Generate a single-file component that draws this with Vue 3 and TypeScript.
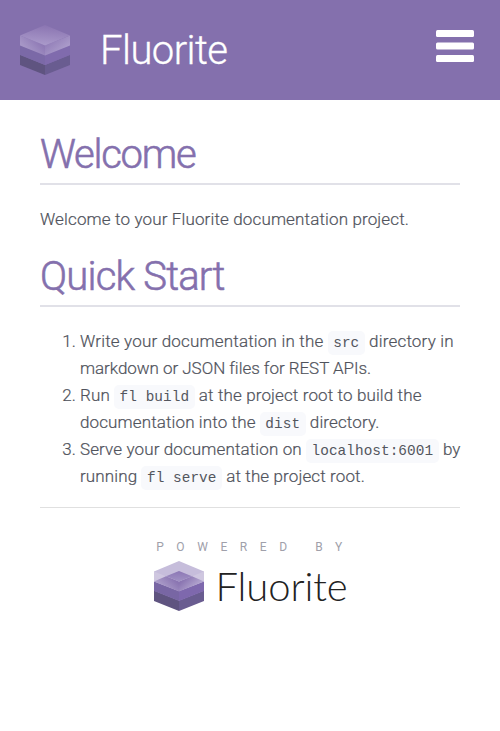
<script setup lang="ts">
interface Part {
  text: string
  code?: boolean
}

const steps: Part[][][] = [
  [
    [{ text: 'Write your documentation in the ' }, { text: 'src', code: true }, { text: ' directory in' }],
    [{ text: 'markdown or JSON files for REST APIs.' }],
  ],
  [
    [{ text: 'Run ' }, { text: 'fl build', code: true }, { text: ' at the project root to build the' }],
    [{ text: 'documentation into the ' }, { text: 'dist', code: true }, { text: ' directory.' }],
  ],
  [
    [{ text: 'Serve your documentation on ' }, { text: 'localhost:6001', code: true }, { text: ' by' }],
    [{ text: 'running ' }, { text: 'fl serve', code: true }, { text: ' at the project root.' }],
  ],
]
</script>

<template>
  <header class="bar">
    <svg class="logo" viewBox="0 0 50 50" aria-hidden="true">
      <defs>
        <linearGradient id="top" x1="0.6" y1="0" x2="0.4" y2="1">
          <stop offset="0" stop-color="#8a74b1" />
          <stop offset="1" stop-color="#ab9bcb" />
        </linearGradient>
        <linearGradient id="left" x1="0.2" y1="0.6" x2="0.7" y2="0.2">
          <stop offset="0" stop-color="#a696c6" />
          <stop offset="1" stop-color="#8e79b5" />
        </linearGradient>
        <linearGradient id="right" x1="0.1" y1="0.2" x2="0.7" y2="0.8">
          <stop offset="0" stop-color="#8e79b5" />
          <stop offset="1" stop-color="#ac9dcb" />
        </linearGradient>
      </defs>
      <path d="M0 40V29.8L25 40V50Z" fill="#5f5480" />
      <path d="M50 40V29.8L25 40V50Z" fill="#695c90" />
      <path d="M0 30V20L25 30V40Z" fill="#7b69a7" />
      <path d="M50 30V20L25 30V40Z" fill="#806bad" />
      <path d="M0 20.4V10.4L25 20.6V30.6Z" fill="url(#left)" />
      <path d="M50 20.4V10.4L25 20.6V30.6Z" fill="url(#right)" />
      <path d="M25 0L50 10.4L25 20.6L0 10.4Z" fill="url(#top)" />
    </svg>
    <span class="brand">Fluorite</span>
    <svg class="menu" viewBox="0 0 38 32" aria-label="Menu">
      <rect width="38" height="7" rx="1.5" />
      <rect y="12.6" width="38" height="7" rx="1.5" />
      <rect y="25" width="38" height="7" rx="1.5" />
    </svg>
  </header>

  <main class="content">
    <h1><span class="welcome">Welcome</span></h1>
    <p class="intro">Welcome to your Fluorite documentation project.</p>
    <h1><span class="quick">Quick Start</span></h1>
    <ol class="steps">
      <li v-for="(lines, i) in steps" :key="i">
        <span v-for="(line, j) in lines" :key="j" class="line" :class="`l${i}${j}`"><template v-for="(part, k) in line" :key="k"><code v-if="part.code">{{ part.text }}</code><span v-else>{{ part.text }}</span></template></span>
      </li>
    </ol>
    <footer class="footer">
      <div class="powered">POWERED BY</div>
      <div class="lockup">
        <svg class="logo" viewBox="0 0 50 50" aria-hidden="true">
          <defs>
            <linearGradient id="inner" x1="0.5" y1="0" x2="0.5" y2="1">
              <stop offset="0" stop-color="#8c77b5" />
              <stop offset="1" stop-color="#a192c4" />
            </linearGradient>
            <linearGradient id="fl" gradientUnits="userSpaceOnUse" x1="4" y1="24" x2="14" y2="13">
              <stop offset="0" stop-color="#aea0cb" />
              <stop offset="1" stop-color="#8b76b2" />
            </linearGradient>
            <linearGradient id="fr" gradientUnits="userSpaceOnUse" x1="34" y1="15" x2="43" y2="25">
              <stop offset="0" stop-color="#8b76b2" />
              <stop offset="1" stop-color="#b3a6cf" />
            </linearGradient>
          </defs>
          <path d="M0 40V29.5L25 39.5V50Z" fill="#5f5480" />
          <path d="M50 40V29.5L25 39.5V50Z" fill="#695c90" />
          <path d="M0 30V20L25 30V40Z" fill="#7866a4" />
          <path d="M50 30V20L25 30V40Z" fill="#7e68ad" />
          <path d="M25 0L50 10.4V20.4L25 30L0 20.4V10.4Z" fill="#c6bddb" />
          <path d="M0 10.4L25 20.6L50 10.4V20.4H0Z" fill="#cfc7e0" />
          <path d="M0 20.4L12 15.2L25 20.6V30.6Z" fill="url(#fl)" />
          <path d="M50 20.4L38 15.2L25 20.6V30.6Z" fill="url(#fr)" />
          <path d="M25 10L38 15.2L25 20.6L12 15.2Z" fill="url(#inner)" />
        </svg>
        <span class="wordmark">Fluorite</span>
      </div>
    </footer>
  </main>
</template>

<style>
body {
  background: #fff;
}
</style>

<style scoped>
.bar {
  box-sizing: border-box;
  height: 100px;
  display: flex;
  align-items: center;
  padding: 0 26px 0 20px;
  background: #8470ad;
  color: #fff;
  font-family: Roboto, "Open Sans", sans-serif;
}
.logo {
  width: 50px;
  height: 50px;
  flex: none;
}
.brand {
  margin-left: 30px;
  padding-top: 2px;
  font-size: 40px;
  font-weight: 300;
  line-height: 60px;
  letter-spacing: -0.55px;
  -webkit-text-stroke: 0.3px currentColor;
}
.menu {
  width: 38px;
  height: 32px;
  margin-left: auto;
  margin-bottom: 8px;
  fill: #fff;
}
.content {
  padding: 24px 40px 0;
  color: #50535c;
  font-family: Roboto, "Open Sans", sans-serif;
  font-size: 17px;
  font-weight: 300;
  line-height: 27px;
}
h1 {
  box-sizing: border-box;
  height: 61px;
  margin: 0;
  border-bottom: 2px solid #e1e1e8;
  color: #8470ad;
  font-size: 40px;
  font-weight: 300;
  line-height: 62px;
  white-space: nowrap;
  -webkit-text-stroke: 0.6px currentColor;
}
.welcome {
  letter-spacing: -1.25px;
}
.quick {
  letter-spacing: -0.8px;
}
.intro {
  margin: 21px 0 13px;
  letter-spacing: 0.14px;
  white-space: nowrap;
  -webkit-text-stroke: 0.2px currentColor;
}
.steps {
  margin: 21px 0 17px;
  padding-left: 40px;
  -webkit-text-stroke: 0.2px currentColor;
}
.line {
  display: block;
  height: 27px;
  letter-spacing: 0.12px;
  white-space: pre;
}
.l00 {
  letter-spacing: 0.18px;
}
.l01 {
  letter-spacing: -0.04px;
}
code {
  padding: 4px 5.5px;
  border-radius: 5px;
  background: #f8f9fc;
  color: #53565e;
  font-family: "Liberation Mono", monospace;
  font-size: 14.4px;
  letter-spacing: 0.05px;
  -webkit-text-stroke: 0;
}
.footer {
  display: flex;
  flex-direction: column;
  align-items: center;
  border-top: 1px solid #e0e0e0;
  padding-top: 30px;
}
.powered {
  margin-right: -11px;
  font-size: 12px;
  font-weight: 400;
  line-height: 18px;
  letter-spacing: 12.6px;
  color: #a0a0aa;
}
.lockup {
  display: flex;
  align-items: center;
  gap: 11px;
  margin-top: 5px;
}
.wordmark {
  margin-right: -2px;
  color: #222;
  font-family: Lato, sans-serif;
  font-size: 40px;
  font-weight: 300;
  line-height: 50px;
  letter-spacing: -0.1px;
}
</style>
